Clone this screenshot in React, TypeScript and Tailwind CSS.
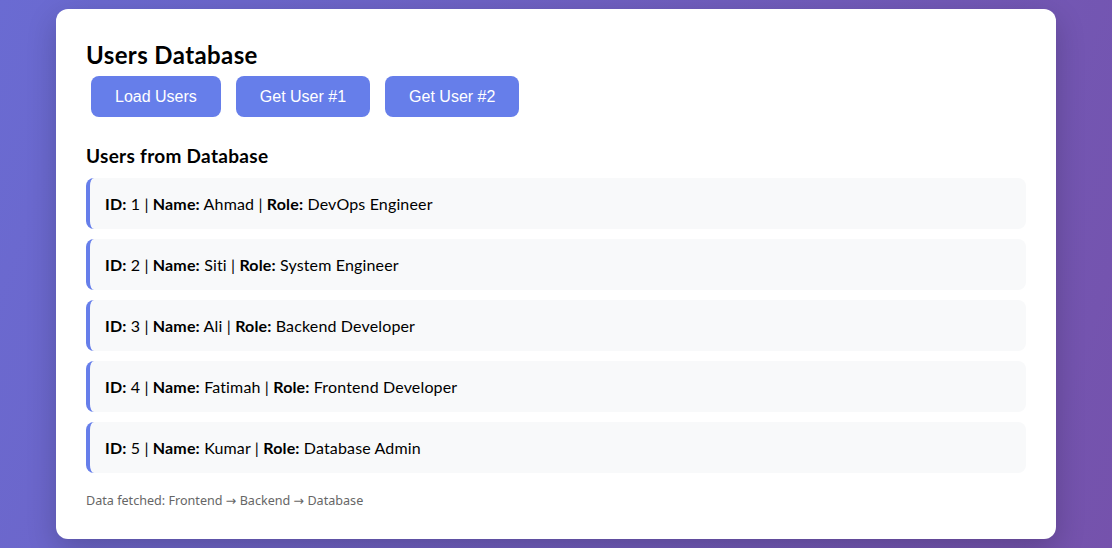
const users = [
  { id: 1, name: "Ahmad", role: "DevOps Engineer" },
  { id: 2, name: "Siti", role: "System Engineer" },
  { id: 3, name: "Ali", role: "Backend Developer" },
  { id: 4, name: "Fatimah", role: "Frontend Developer" },
  { id: 5, name: "Kumar", role: "Database Admin" },
];

const buttons = ["Load Users", "Get User #1", "Get User #2"];

export default function App() {
  return (
    <div className="min-h-[548px] bg-[linear-gradient(110deg,#6a6bd2_0%,#7552ac_100%)] py-[9px] font-['Lato',sans-serif] text-black">
      <div className="mx-auto w-[1000px] rounded-[12px] bg-white p-[30px] shadow-[0_10px_30px_rgba(0,0,0,0.2)]">
        <h2 className="text-[24px] leading-[32px] font-bold tracking-[0.4px]">Users Database</h2>
        <div className="flex gap-[15px] px-[5px] py-[5px]">
          {buttons.map(label => (
            <button
              key={label}
              className="rounded-[8px] bg-[#667eea] px-[24px] py-[11px] font-['Liberation_Sans',Arial,sans-serif] text-[16px] leading-[19px] text-white"
            >
              {label}
            </button>
          ))}
        </div>

        <div className="mt-[22px]">
          <h3 className="mb-[10px] text-[19px] leading-[24px] font-bold tracking-[0.3px]">Users from Database</h3>
          <div className="flex flex-col gap-[10px]">
            {users.map(u => (
              <div
                key={u.id}
                className="rounded-[8px] border-l-4 border-[#667eea] bg-[#f8f9fa] px-[15px] py-[15px] text-[16px] leading-[21px] tracking-[0.15px]"
              >
                <strong>ID:</strong> {u.id} | <strong>Name:</strong> {u.name} | <strong>Role:</strong> {u.role}
              </div>
            ))}
          </div>
        </div>

        <p className="mt-[20px] font-['Noto_Sans',sans-serif] text-[12.6px] leading-[16px] text-[#666]">
          Data fetched: Frontend <span className="font-['DejaVu_Sans',sans-serif]">→</span> Backend{" "}
          <span className="font-['DejaVu_Sans',sans-serif]">→</span> Database
        </p>
      </div>
    </div>
  );
}
